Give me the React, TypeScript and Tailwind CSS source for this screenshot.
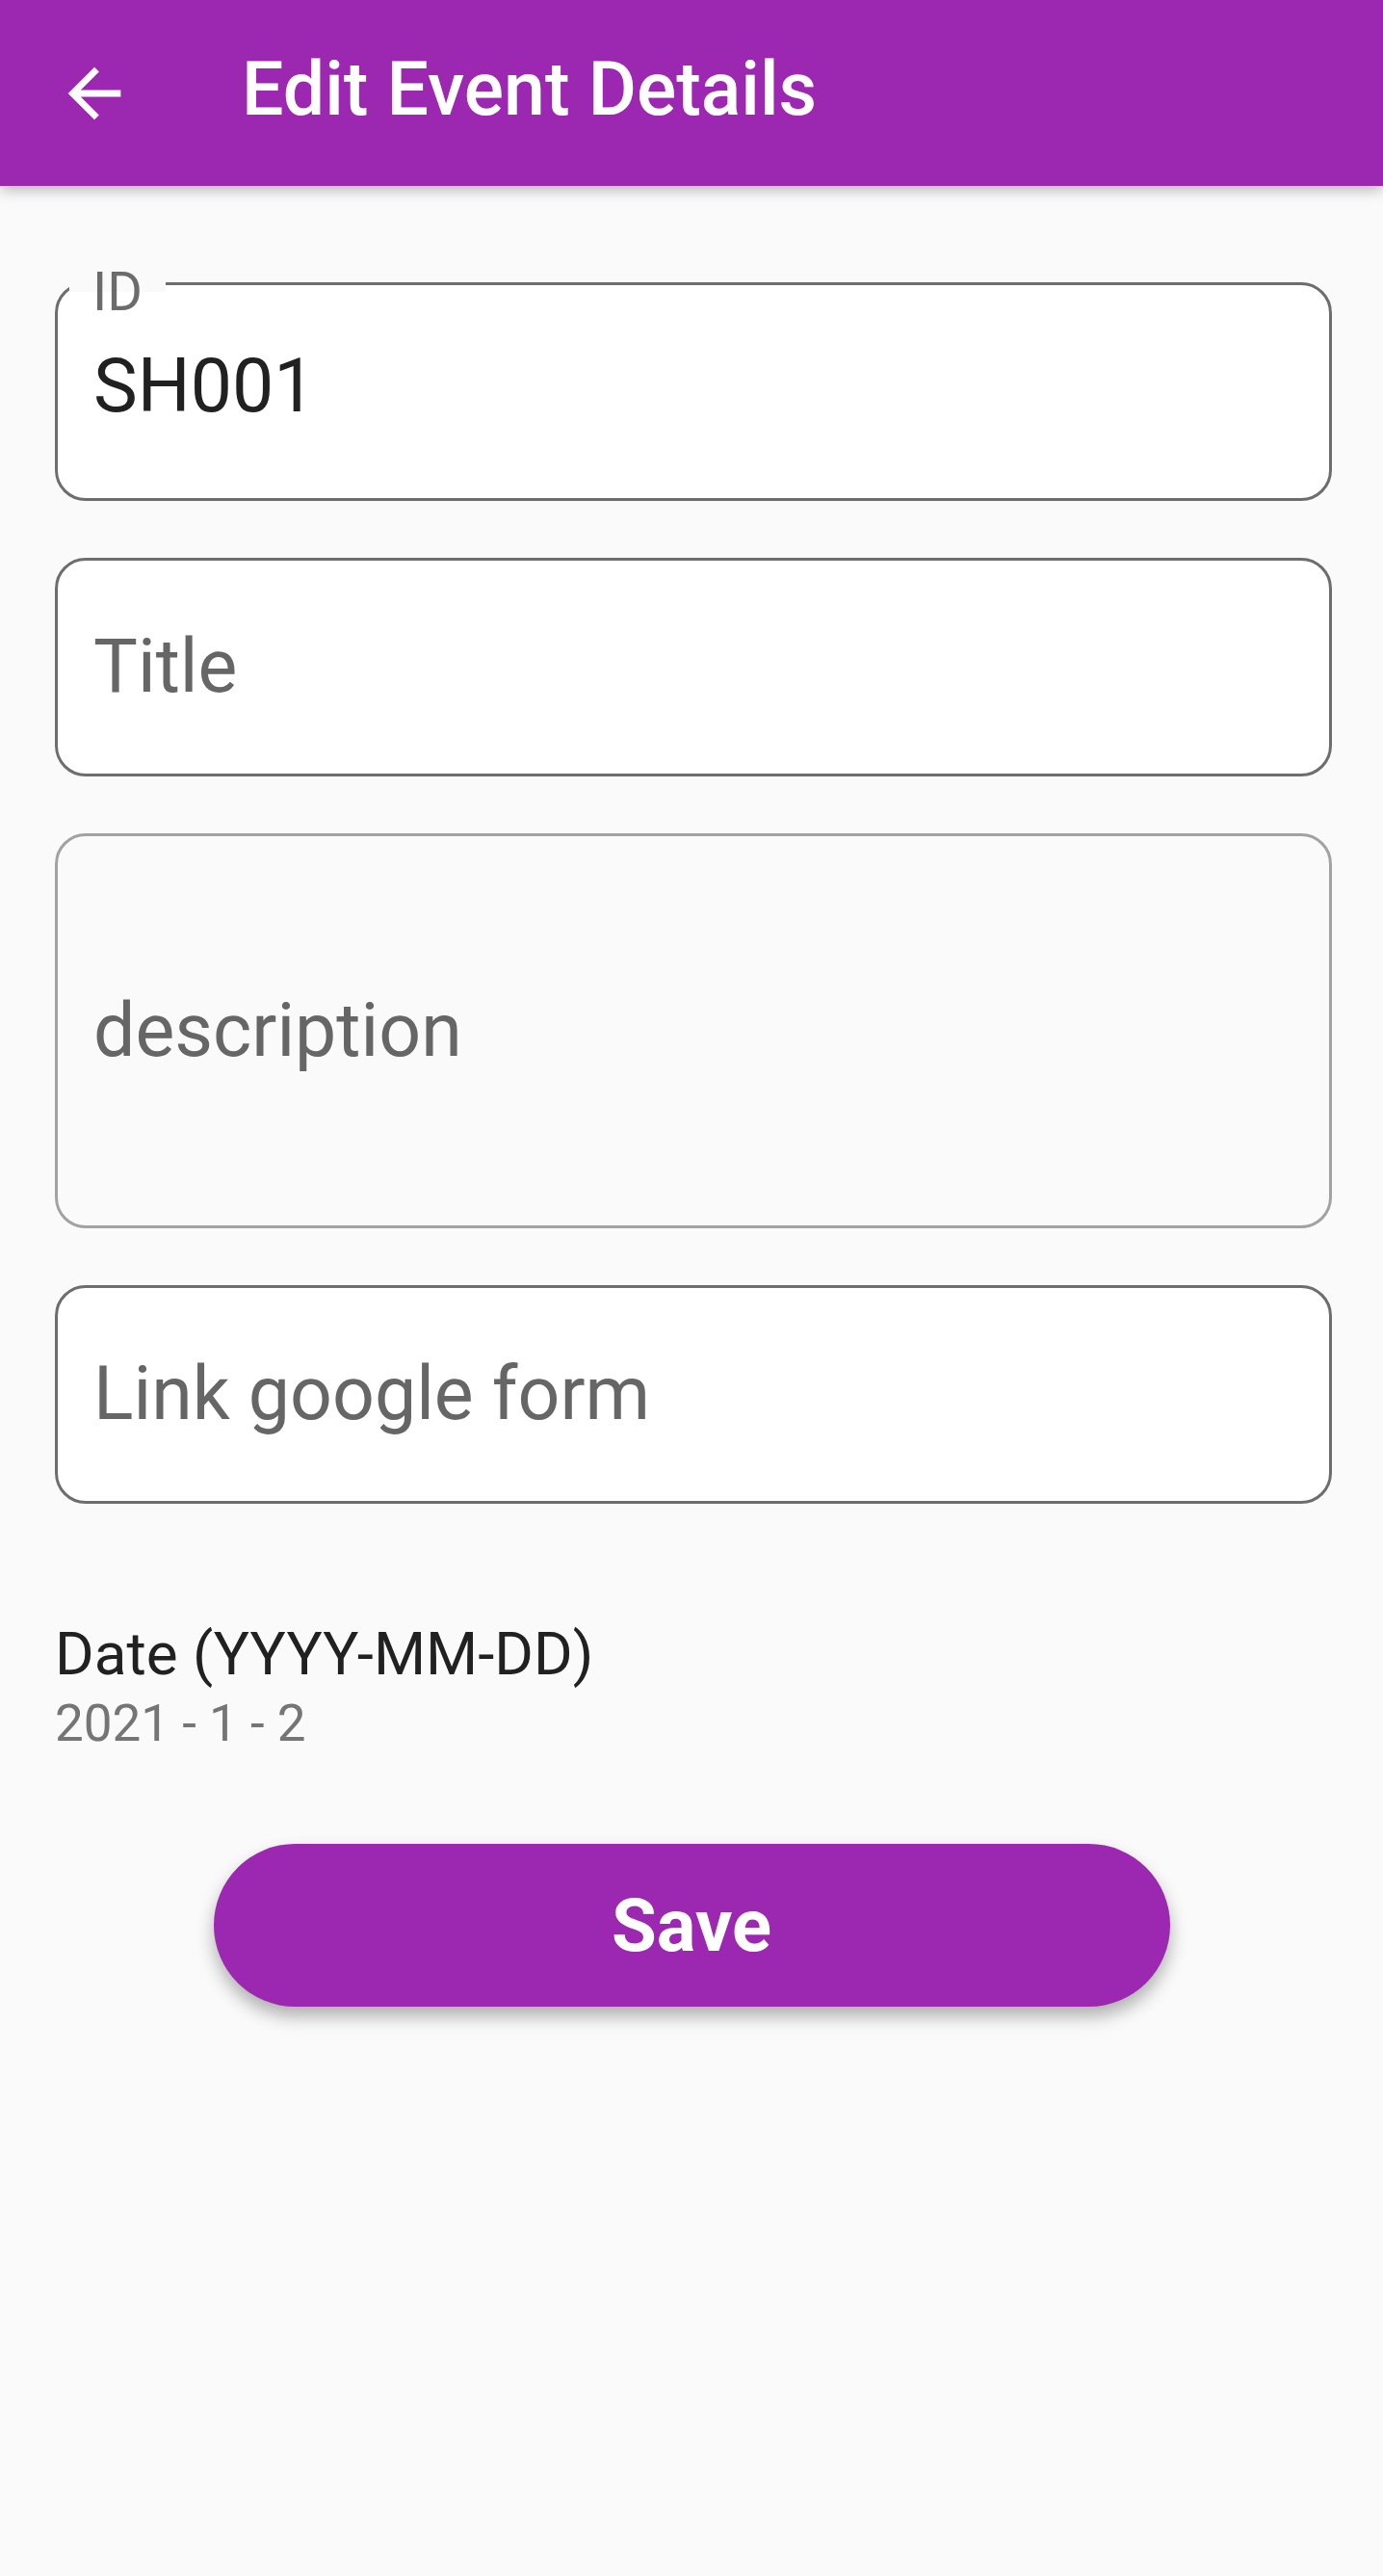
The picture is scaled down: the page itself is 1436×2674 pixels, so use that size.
import React from 'react';

const ArrowBack = () => (
  <svg viewBox="0 0 24 24" width={82} height={82} fill="#ffffff">
    <path d="M20 11H7.83l5.59-5.59L12 4l-8 8 8 8 1.41-1.41L7.83 13H20v-2z" />
  </svg>
);

type FieldProps = {
  label?: string;
  value?: string;
  placeholder?: string;
  tall?: boolean;
  muted?: boolean;
};

const Field = ({ label, value, placeholder, tall, muted }: FieldProps) => {
  const box = muted
    ? 'border-[#a2a2a2] bg-transparent'
    : 'border-[#6d6d6d] bg-white';
  return (
    <div
      className={`relative flex items-center rounded-[32px] border-[3px] pl-[37px] ${box} ${
        tall ? 'h-[410px]' : 'h-[227px]'
      } ${label ? 'pb-[10px]' : ''}`}
    >
      {label && (
        <span className="absolute left-[12px] top-[-21px] bg-[linear-gradient(to_bottom,#fafafa_50%,#ffffff_50%)] px-[24px] text-[56px] leading-none text-[#6b6b6b]">
          {label}
        </span>
      )}
      {value ? (
        <span className="text-[77px] leading-none text-[#212121]">{value}</span>
      ) : (
        <span className="text-[77px] leading-none text-[#666666]">{placeholder}</span>
      )}
    </div>
  );
};

const App = () => {
  return (
    <div className="min-h-[2674px] w-full bg-[#fafafa] font-['Roboto',sans-serif]">
      {/* Toolbar */}
      <header className="relative z-10 flex h-[193px] items-center bg-[#9c27b0] pb-[6px] shadow-[0_4px_14px_rgba(0,0,0,0.28)]">
        <button className="ml-[57px] flex h-[82px] w-[82px] items-center justify-center pt-[6px]">
          <ArrowBack />
        </button>
        <h1 className="ml-[112px] text-[77px] font-medium leading-none text-white">
          Edit Event Details
        </h1>
      </header>

      {/* Form */}
      <main className="pl-[57px] pr-[53px] pt-[100px]">
        <div className="flex flex-col gap-[59px]">
          <Field label="ID" value="SH001" />
          <Field placeholder="Title" />
          <Field placeholder="description" tall muted />
          <Field placeholder="Link google form" />
        </div>

        <div className="mt-[125px]">
          <div className="text-[62px] leading-none text-[#212121]">Date (YYYY-MM-DD)</div>
          <div className="mt-[15px] text-[53px] leading-none text-[#757575]">2021 - 1 - 2</div>
        </div>

        <div className="mt-[98px] flex justify-center pr-[4px]">
          <button className="h-[169px] w-[993px] rounded-full bg-[#9c27b0] text-[76px] font-bold leading-none text-white shadow-[0_10px_18px_rgba(0,0,0,0.3)]">
            Save
          </button>
        </div>
      </main>
    </div>
  );
};

export default App;
